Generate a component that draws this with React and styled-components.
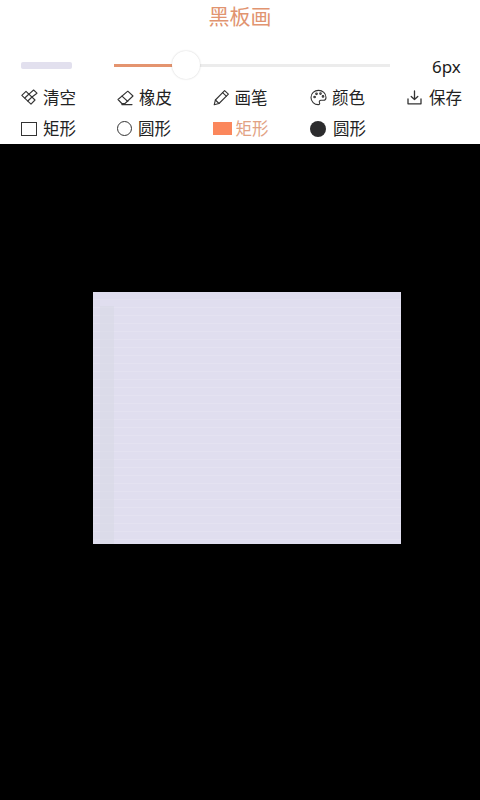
import React from "react";
import styled, { createGlobalStyle } from "styled-components";

const Global = createGlobalStyle`
  html, body { margin: 0; padding: 0; background: #000; }
  body { font-family: "Noto Sans CJK SC", "Noto Sans", sans-serif; }
`;

const Page = styled.div`
  width: 480px;
  height: 800px;
  display: flex;
  flex-direction: column;
  overflow: hidden;
  background: #000;
`;

const Panel = styled.div`
  height: 144px;
  flex: none;
  background: #fff;
  display: flex;
  flex-direction: column;
`;

const Title = styled.div`
  height: 34px;
  margin-bottom: 15px;
  text-align: center;
  font-size: 21px;
  line-height: 31px;
  color: #e19470;
`;

const SliderRow = styled.div`
  height: 34px;
  display: flex;
  align-items: center;
  padding-left: 21px;
`;

const Preview = styled.div`
  width: 51px;
  height: 7px;
  border-radius: 2px;
  background: #e2e0ee;
`;

const Track = styled.div`
  position: relative;
  width: 276px;
  height: 2.5px;
  margin-left: 42px;
  background: #ececec;
`;

const Fill = styled.div`
  height: 100%;
  background: #e4946f;
`;

const Thumb = styled.div`
  position: absolute;
  top: -12.75px;
  width: 28px;
  height: 28px;
  margin-left: -14px;
  border-radius: 50%;
  background: #fff;
  box-shadow: 0 0 2px rgba(0, 0, 0, 0.2);
`;

const SizeLabel = styled.div`
  margin-left: 42px;
  padding-top: 2px;
  font-family: "Noto Sans", sans-serif;
  font-size: 17px;
  color: #1c1c1c;
`;

const ToolRow = styled.div`
  height: 31px;
  display: grid;
  grid-template-columns: 96px 95.5px 97.5px 97px 1fr;
  padding-left: 21px;
`;

const Tool = styled.div`
  display: flex;
  align-items: center;
  gap: ${(p) => p.$gap || 5}px;
  font-size: 16.5px;
  line-height: 31px;
  color: ${(p) => (p.$active ? "#e2a283" : "#222")};
`;

const Icon = styled.svg`
  width: ${(p) => p.$size || 17}px;
  height: ${(p) => p.$size || 17}px;
  flex: none;
  fill: none;
  stroke: #333;
  stroke-width: 1.1;
  stroke-linecap: round;
  stroke-linejoin: round;
`;

const Stage = styled.div`
  flex: 1;
  background: #000;
  padding: 148px 0 0 93px;
`;

const Board = styled.div`
  position: relative;
  width: 308px;
  height: 252px;
  background-color: #e0deef;
  background-image: repeating-linear-gradient(
    to bottom,
    rgba(255, 255, 255, 0) 0,
    rgba(255, 255, 255, 0) 7px,
    rgba(255, 255, 255, 0.13) 7px,
    rgba(255, 255, 255, 0.13) 8px
  );
`;

const Margin = styled.div`
  position: absolute;
  left: 7px;
  top: 14px;
  bottom: 0;
  width: 14px;
  background: rgba(212, 214, 226, 0.45);
`;

const BrushIcon = () => (
  <Icon viewBox="0 0 17 17">
    <path d="M0.8 6.4 L5 2.4 L14 11 L10 15.2 Z" />
    <path d="M3.8 9 L8 5 M6.8 12 L11 8" />
    <path d="M8 5.2 L12.6 1 L16 4.2 L11 8" />
  </Icon>
);

const EraserIcon = () => (
  <Icon viewBox="0 0 17 17">
    <path d="M1 10.5 L10.8 2.2 L16 7 L8 14.5 H4.8 Z" />
    <path d="M5 7.2 L10.8 12.5" />
    <path d="M4.8 15.6 H15" />
  </Icon>
);

const PencilIcon = () => (
  <Icon viewBox="0 0 17 17">
    <path d="M1.2 15.8 L2.4 11 L11.6 1.6 L15.4 5.2 L6 14.5 Z" />
    <path d="M9.6 3.6 L13.3 7.2 M2.4 11 L6 14.5" />
  </Icon>
);

const PaletteIcon = () => (
  <Icon viewBox="0 0 17 17">
    <path d="M8.5 1.4 C4.3 1.4 1 4.5 1 8.5 C1 12.5 4.3 15.6 8.2 15.6 C9.6 15.6 10 14.7 9.5 13.7 C8.9 12.4 9.6 11.2 11 11.2 H13.5 C15 11.2 16 10.1 16 8.4 C16 4.5 12.7 1.4 8.5 1.4 Z" />
    <circle cx="4.6" cy="8" r="0.8" />
    <circle cx="6.5" cy="4.8" r="0.8" />
    <circle cx="10.5" cy="4.6" r="0.8" />
    <circle cx="13" cy="7.4" r="0.8" />
  </Icon>
);

const SaveIcon = () => (
  <Icon viewBox="0 0 15 15" $size={15}>
    <path d="M7.5 1 V9.5 M4.2 6.5 L7.5 9.5 L10.8 6.5" strokeWidth="1.3" />
    <path d="M1 9 V13.8 H14 V9" strokeWidth="1.3" />
  </Icon>
);

const RectIcon = styled.span`
  width: 14px;
  height: 12px;
  border: 1.2px solid #333;
  flex: none;
`;

const FilledRect = styled.span`
  width: 19px;
  height: 13px;
  background: #fb875c;
  flex: none;
`;

const CircleIcon = styled.span`
  width: 13px;
  height: 13px;
  border: 1.2px solid #333;
  border-radius: 50%;
  flex: none;
`;

const FilledCircle = styled.span`
  width: 16px;
  height: 16px;
  background: #2b2b2d;
  border-radius: 50%;
  flex: none;
`;

export default function App() {
  return (
    <Page>
      <Global />
      <Panel>
        <Title>黑板画</Title>
        <SliderRow>
          <Preview />
          <Track>
            <Fill style={{ width: "26%" }} />
            <Thumb style={{ left: "26%" }} />
          </Track>
          <SizeLabel>6px</SizeLabel>
        </SliderRow>
        <ToolRow>
          <Tool $gap={5}><BrushIcon />清空</Tool>
          <Tool><EraserIcon />橡皮</Tool>
          <Tool><PencilIcon />画笔</Tool>
          <Tool><PaletteIcon />颜色</Tool>
          <Tool $gap={7}><SaveIcon />保存</Tool>
        </ToolRow>
        <ToolRow>
          <Tool $gap={6}><RectIcon />矩形</Tool>
          <Tool $gap={6}><CircleIcon />圆形</Tool>
          <Tool $gap={4} $active><FilledRect />矩形</Tool>
          <Tool $gap={7}><FilledCircle />圆形</Tool>
        </ToolRow>
      </Panel>
      <Stage>
        <Board>
          <Margin />
        </Board>
      </Stage>
    </Page>
  );
}
